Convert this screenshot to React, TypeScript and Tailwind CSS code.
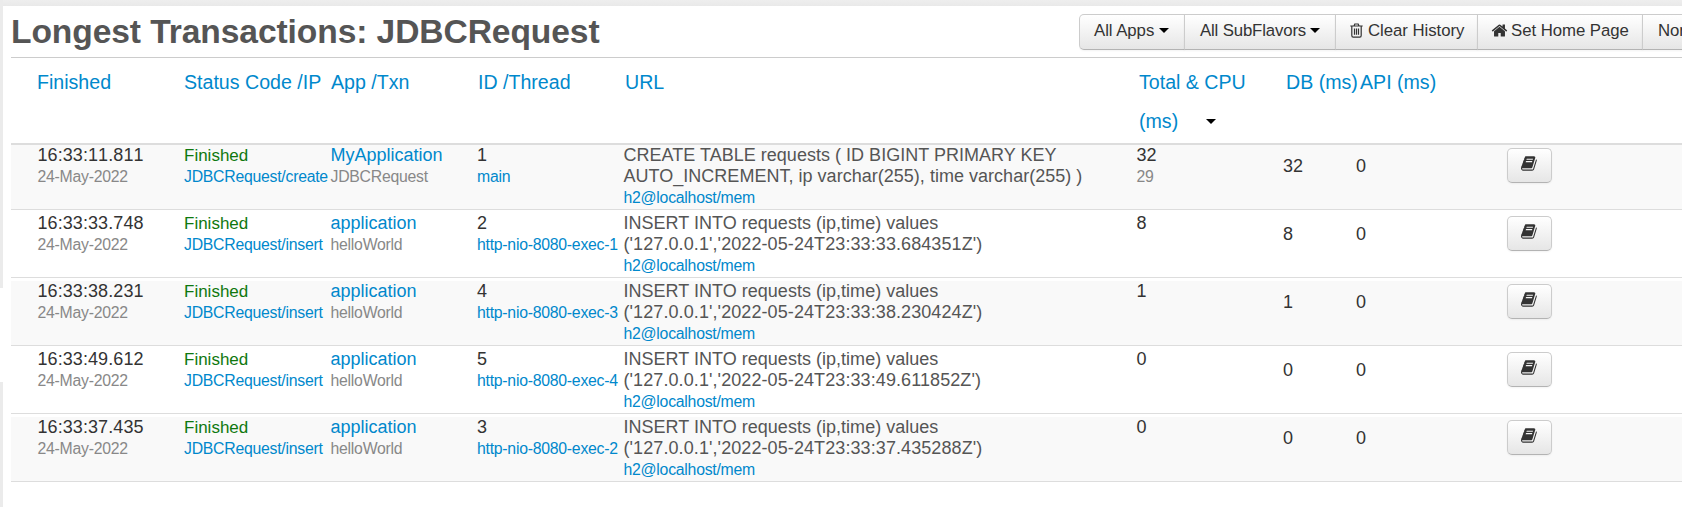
import React from "react";

type Txn = {
  time: string;
  code: string;
  app: string;
  txn: string;
  id: string;
  thread: string;
  sql: [string, string];
  total: string;
  cpu?: string;
  db: string;
};

const insert = (stamp: string): [string, string] => [
  "INSERT INTO requests (ip,time) values",
  `('127.0.0.1','2022-05-24T23:33:${stamp}Z')`,
];

const rows: Txn[] = [
  {
    time: "16:33:11.811",
    code: "JDBCRequest/create",
    app: "MyApplication",
    txn: "JDBCRequest",
    id: "1",
    thread: "main",
    sql: ["CREATE TABLE requests ( ID BIGINT PRIMARY KEY", "AUTO_INCREMENT, ip varchar(255), time varchar(255) )"],
    total: "32",
    cpu: "29",
    db: "32",
  },
  { time: "16:33:33.748", code: "JDBCRequest/insert", app: "application", txn: "helloWorld", id: "2", thread: "http-nio-8080-exec-1", sql: insert("33.684351"), total: "8", db: "8" },
  { time: "16:33:38.231", code: "JDBCRequest/insert", app: "application", txn: "helloWorld", id: "4", thread: "http-nio-8080-exec-3", sql: insert("38.230424"), total: "1", db: "1" },
  { time: "16:33:49.612", code: "JDBCRequest/insert", app: "application", txn: "helloWorld", id: "5", thread: "http-nio-8080-exec-4", sql: insert("49.611852"), total: "0", db: "0" },
  { time: "16:33:37.435", code: "JDBCRequest/insert", app: "application", txn: "helloWorld", id: "3", thread: "http-nio-8080-exec-2", sql: insert("37.435288"), total: "0", db: "0" },
];

const Caret = ({ className = "" }: { className?: string }) => (
  <svg className={`block h-[5px] w-[10px] shrink-0 ${className}`} viewBox="0 0 10 5">
    <path d="M0 0h10L5 5z" fill="#000" />
  </svg>
);

const Trash = () => (
  <svg className="block h-[15px] w-[13px]" viewBox="0 0 13 15" fill="none" stroke="#333" strokeWidth="1.2">
    <path d="M0.3 3H12.7M4 3L4.8 1H8.2L9 3M1.8 3V12.6Q1.8 14.2 3.2 14.2H9.8Q11.2 14.2 11.2 12.6V3M4.5 5.5V11.8M6.5 5.5V11.8M8.5 5.5V11.8" />
  </svg>
);

const Home = () => (
  <svg className="block size-[17px]" viewBox="0 0 1792 1792" fill="#333">
    <path d="M1472 992v480q0 26-19 45t-45 19h-384v-384h-256v384h-384q-26 0-45-19t-19-45v-480q0-1 .5-3t.5-3l575-474 575 474q1 2 1 6zm223-69l-62 74q-8 9-21 11h-3q-13 0-21-7l-692-577-692 577q-12 8-24 7-13-2-21-11l-62-74q-8-10-7-23.5t11-21.5l719-599q32-26 76-26t76 26l244 204v-195q0-14 9-23t23-9h192q14 0 23 9t9 23v408l219 182q10 8 11 21.5t-7 23.5z" />
  </svg>
);

const Book = () => (
  <svg className="block size-[17px]" viewBox="0 0 1792 1792" fill="#333">
    <path d="M1639 478q40 57 18 129l-275 906q-19 64-76.500 107.500t-122.500 43.500h-923q-77 0-148.500-53.500t-99.500-131.500q-24-67-2-127 0-4 3-27t4-37q1-8-3-21.500t-3-19.500q2-11 8-21t16.500-23.500 16.500-23.500q23-38 45-91.500t30-91.500q3-10 .5-30t-.5-28q3-11 17-28t17-23q21-36 42-92t25-90q1-9-2.500-32t.5-28q4-13 22-30.500t22-22.500q19-26 42.500-84.500t27.500-96.500q1-8-3-25.500t-2-26.500q2-8 9-18t18-23 17-21q8-12 16.500-30.500t15-35 16-36 19.500-32 26.500-23.500 36-11.500 47.500 5.500l-1 3q38-9 51-9h761q74 0 114 56t18 130l-274 906q-36 119-71.500 153.500t-128.500 34.500h-869q-27 0-38 15-11 16-1 43 24 70 144 70h923q29 0 56-15.500t35-41.500l300-987q7-22 5-57 38 15 59 43zm-1064 2q-4 13 2 22.500t20 9.500h608q13 0 25.500-9.500t16.500-22.500l21-64q4-13-2-22.500t-20-9.500h-608q-13 0-25.500 9.500t-16.500 22.500zm-83 256q-4 13 2 22.500t20 9.500h608q13 0 25.500-9.500t16.500-22.500l21-64q4-13-2-22.500t-20-9.500h-608q-13 0-25.500 9.500t-16.500 22.500z" />
  </svg>
);

const buttonLook =
  "border border-[#ccc] border-b-[#b3b3b3] bg-linear-to-b from-white to-[#e6e6e6] shadow-[inset_0_1px_0_rgba(255,255,255,0.2),0_1px_2px_rgba(0,0,0,0.05)]";

const ToolButton = ({ className, children }: { className: string; children: React.ReactNode }) => (
  <button className={`-ml-px flex h-9 shrink-0 items-center pb-[3px] text-[16.8px] tracking-[-0.05px] text-[#333] ${buttonLook} ${className}`}>
    {children}
  </button>
);

const small = "text-[15.8px] tracking-[-0.25px]";

export default function App() {
  return (
    <div className="flex h-[507px] w-[1682px] overflow-hidden bg-white font-['Liberation_Sans',Arial,sans-serif] text-[#333]">
      <div className="flex w-[3px] shrink-0 flex-col justify-between bg-white">
        <div className="h-[288px] bg-[#ebebeb]" />
        <div className="h-[125px] bg-[#ebebeb]" />
      </div>
      <div className="flex min-w-0 flex-1 flex-col">
        <div className="h-[6px] shrink-0 bg-linear-to-b from-[#eee] to-[#e9e9e9]" />
        <main className="ml-2">
          <header className="flex h-[52px] justify-between border-b border-[#ccc]">
            <h1 className="pt-[6px] text-[33.6px] leading-[40px] font-bold tracking-[-0.09px] whitespace-nowrap text-[#555]">
              Longest Transactions: JDBCRequest
            </h1>
            <div className="mt-2 flex h-[42px] w-[603px] shrink-0 overflow-hidden pl-px whitespace-nowrap">
              <ToolButton className="w-[106px] gap-[5px] rounded-l-[5px] pl-[14px]">All Apps<Caret /></ToolButton>
              <ToolButton className="w-[152px] gap-[4px] pl-[15px] tracking-[-0.15px]">All SubFlavors<Caret /></ToolButton>
              <ToolButton className="w-[143px] gap-[5px] pl-[14px]"><Trash />Clear History</ToolButton>
              <ToolButton className="w-[166px] gap-[3px] pl-[13px]"><Home />Set Home Page</ToolButton>
              <ToolButton className="w-[120px] pl-[15px]">Normal</ToolButton>
            </div>
          </header>
          <div className="grid h-[87px] grid-cols-[147px_147px_147px_147px_514px_147px_74px_1fr] border-b-2 border-[#ddd] pt-[5px] pl-[26px] text-[19.6px] leading-[39px] whitespace-nowrap text-[#08c]">
            <span>Finished</span>
            <span>Status Code /IP</span>
            <span>App /Txn</span>
            <span>ID /Thread</span>
            <span>URL</span>
            <div>
              <div>Total &amp; CPU</div>
              <div className="flex items-center gap-[28px]">(ms)<Caret /></div>
            </div>
            <span>DB (ms)</span>
            <span>API (ms)</span>
          </div>
          {rows.map((r, i) => (
            <div
              key={r.time}
              className={`flex flex-col border-b border-[#ddd] ${i === 0 ? "h-[65px]" : "h-[68px] pt-[3px]"}`}
            >
              <div
                className={`grid flex-1 grid-cols-[146.5px_146.5px_146.5px_146.5px_513px_146.5px_73px_151px_1fr] pl-[26.5px] text-[18px] leading-[21px] whitespace-nowrap ${i % 2 === 0 ? "bg-[#f9f9f9]" : ""}`}
              >
                <div>
                  <div className="tracking-[0.08px] [font-kerning:none]">{r.time}</div>
                  <div className={`${small} text-[#888]`}>24-May-2022</div>
                </div>
                <div>
                  <div className="text-[17px] text-[#0f780f]">Finished</div>
                  <div className={`${small} text-[#08c]`}>{r.code}</div>
                </div>
                <div>
                  <div className="text-[#08c]">{r.app}</div>
                  <div className={`${small} text-[#888]`}>{r.txn}</div>
                </div>
                <div>
                  <div>{r.id}</div>
                  <div className={`${small} text-[#08c]`}>{r.thread}</div>
                </div>
                <div className="text-[#555]">
                  <div className="tracking-[0.02px]">{r.sql[0]}</div>
                  <div className={i === 0 ? "tracking-[0.02px]" : "tracking-[0.09px]"}>{r.sql[1]}</div>
                  <div className={`${small} text-[#08c]`}>h2@localhost/mem</div>
                </div>
                <div>
                  <div>{r.total}</div>
                  {r.cpu && <div className={`${small} text-[#888]`}>{r.cpu}</div>}
                </div>
                <div className="pt-[11px]">{r.db}</div>
                <div className="pt-[11px]">0</div>
                <div className="pt-[3px]">
                  <button className={`flex h-[35px] w-[45px] justify-center rounded-[5px] pt-[6px] ${buttonLook}`}>
                    <Book />
                  </button>
                </div>
              </div>
            </div>
          ))}
        </main>
      </div>
    </div>
  );
}
